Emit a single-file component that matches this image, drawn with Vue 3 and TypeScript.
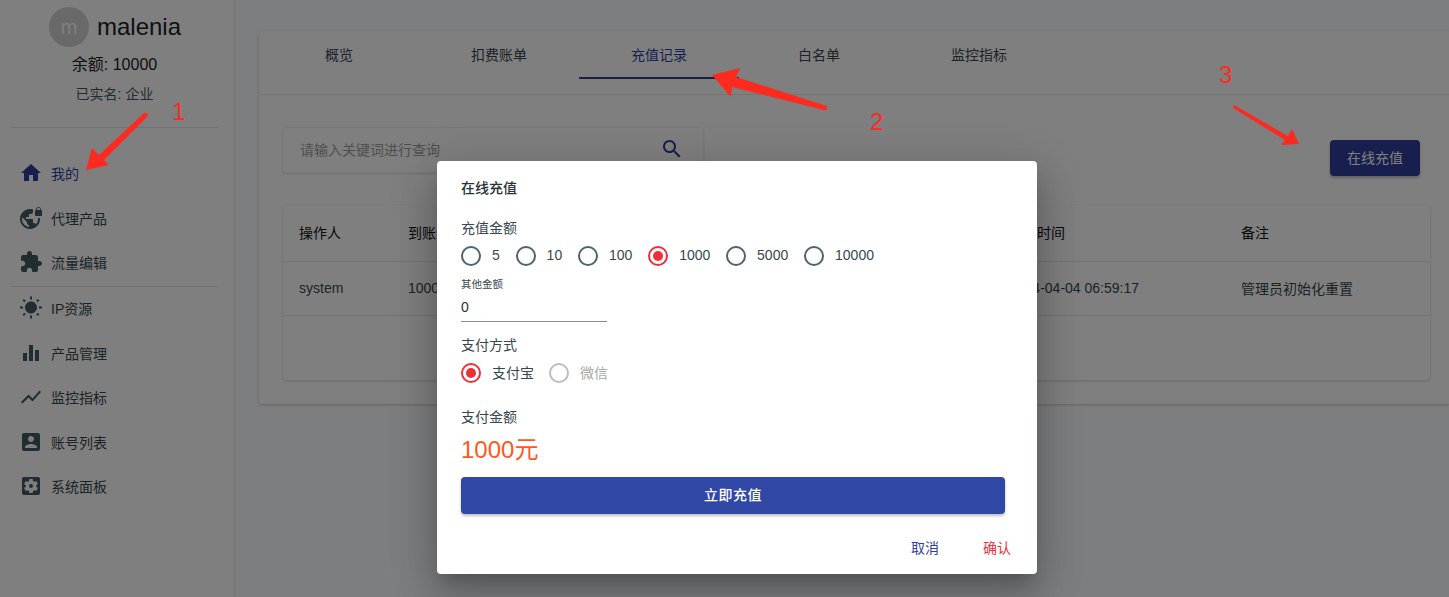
<script setup lang="ts">
const navTop = [
  { label: '我的', active: true, d: 'M10,20V14H14V20H19V12H22L12,3L2,12H5V20H10Z' },
  { label: '代理产品', d: 'M22 4v-.5C22 2.12 20.88 1 19.5 1S17 2.12 17 3.5V4c-.55 0-1 .45-1 1v4c0 .55.45 1 1 1h5c.55 0 1-.45 1-1V5c0-.55-.45-1-1-1zm-.8 0h-3.4v-.5c0-.94.76-1.7 1.7-1.7s1.7.76 1.7 1.7V4zm-2.28 8c.04.33.08.66.08 1 0 2.08-.8 3.97-2.1 5.39-.26-.81-1-1.39-1.9-1.39h-1v-3c0-.55-.45-1-1-1H7v-2h2c.55 0 1-.45 1-1V8h2c1.1 0 2-.9 2-2V3.46c-.95-.3-1.95-.46-3-.46C5.48 3 1 7.48 1 13s4.48 10 10 10 10-4.48 10-10c0-.34-.02-.67-.05-1h-2.03zM10 20.93c-3.95-.49-7-3.85-7-7.93 0-.62.08-1.21.21-1.79L8 16v1c0 1.1.9 2 2 2v1.93z' },
  { label: '流量编辑', d: 'M20.5 11H19V7c0-1.1-.9-2-2-2h-4V3.5C13 2.12 11.88 1 10.5 1S8 2.12 8 3.5V5H4c-1.1 0-1.99.9-1.99 2v3.8H3.5c1.49 0 2.7 1.21 2.7 2.7s-1.21 2.7-2.7 2.7H2V20c0 1.1.9 2 2 2h3.8v-1.5c0-1.49 1.21-2.7 2.7-2.7 1.49 0 2.7 1.21 2.7 2.7V22H17c1.1 0 2-.9 2-2v-4h1.5c1.38 0 2.5-1.12 2.5-2.5S21.88 11 20.5 11z' },
]
const navBottom = [
  { label: 'IP资源', d: 'M6.76 4.84l-1.8-1.79-1.41 1.41 1.79 1.79 1.42-1.41zM4 10.5H1v2h3v-2zm9-9.95h-2V3.5h2V.55zm7.45 3.91l-1.41-1.41-1.79 1.79 1.41 1.41 1.79-1.79zm-3.21 13.7l1.79 1.8 1.41-1.41-1.8-1.79-1.4 1.4zM20 10.5v2h3v-2h-3zm-8-5c-3.31 0-6 2.69-6 6s2.69 6 6 6 6-2.69 6-6-2.69-6-6-6zm-1 16.95h2V19.5h-2v2.95zm-7.45-3.91l1.41 1.41 1.79-1.8-1.41-1.41-1.79 1.8z' },
  { label: '产品管理', d: 'M10 20h4V4h-4v16zm-6 0h4v-8H4v8zM16 9v11h4V9h-4z' },
  { label: '监控指标', d: 'M3.5 18.49l6-6.01 4 4L22 6.92l-1.41-1.41-7.09 7.97-4-4L2 16.99z' },
  { label: '账号列表', d: 'M3 5v14c0 1.1.89 2 2 2h14c1.1 0 2-.9 2-2V5c0-1.1-.9-2-2-2H5c-1.11 0-2 .9-2 2zm12 4c0 1.66-1.34 3-3 3s-3-1.34-3-3 1.34-3 3-3 3 1.34 3 3zm-9 8c0-2 4-3.1 6-3.1s6 1.1 6 3.1v1H6v-1z' },
  { label: '系统面板', d: 'M12 10c-1.1 0-2 .9-2 2s.9 2 2 2 2-.9 2-2-.9-2-2-2zm7-7H5c-1.11 0-2 .9-2 2v14c0 1.1.89 2 2 2h14c1.11 0 2-.9 2-2V5c0-1.1-.89-2-2-2zm-1.75 9c0 .23-.02.46-.05.68l1.48 1.16c.13.11.17.3.08.45l-1.4 2.42c-.09.15-.27.21-.43.15l-1.74-.7c-.36.28-.76.51-1.18.69l-.26 1.85c-.03.17-.18.3-.35.3h-2.8c-.17 0-.32-.13-.35-.29l-.26-1.85c-.43-.18-.82-.41-1.18-.69l-1.74.7c-.16.06-.34 0-.43-.15l-1.4-2.42c-.09-.15-.05-.34.08-.45l1.48-1.16c-.03-.23-.05-.46-.05-.69 0-.23.02-.46.05-.68l-1.48-1.16c-.13-.11-.17-.3-.08-.45l1.4-2.42c.09-.15.27-.21.43-.15l1.74.7c.36-.28.76-.51 1.18-.69l.26-1.85c.03-.17.18-.3.35-.3h2.8c.17 0 .32.13.35.29l.26 1.85c.43.18.82.41 1.18.69l1.74-.7c.16-.06.34 0 .43.15l1.4 2.42c.09.15.05.34-.08.45l-1.48 1.16c.03.23.05.46.05.69z' },
]
const tabs = ['概览', '扣费账单', '充值记录', '白名单', '监控指标']
const amounts = [5, 10, 100, 1000, 5000, 10000]
const selected = 1000
const searchPath = 'M15.5 14h-.79l-.28-.27C15.41 12.59 16 11.11 16 9.5 16 5.91 13.09 3 9.5 3S3 5.91 3 9.5 5.91 16 9.5 16c1.61 0 3.09-.59 4.23-1.57l.27.28v.79l5 4.99L20.49 19l-4.99-5zm-6 0C7.01 14 5 11.99 5 9.5S7.01 5 9.5 5 14 7.01 14 9.5 11.99 14 9.5 14z'
</script>

<template>
  <div class="page">
    <aside class="sidebar">
      <div class="profile">
        <div class="avatar">m</div>
        <span class="name">malenia</span>
      </div>
      <p class="balance">余额: 10000</p>
      <p class="verified">已实名: 企业</p>
      <hr class="rule rule-first" />
      <nav class="nav nav-first">
        <a v-for="item in navTop" :key="item.label" class="nav-item" :class="{ active: item.active }">
          <svg viewBox="0 0 24 24" width="24" height="24"><path :d="item.d" /></svg>
          <span>{{ item.label }}</span>
        </a>
      </nav>
      <hr class="rule rule-second" />
      <nav class="nav nav-second">
        <a v-for="item in navBottom" :key="item.label" class="nav-item">
          <svg viewBox="0 0 24 24" width="24" height="24"><path :d="item.d" /></svg>
          <span>{{ item.label }}</span>
        </a>
      </nav>
    </aside>

    <main class="main">
      <section class="card">
        <div class="tabs">
          <div v-for="tab in tabs" :key="tab" class="tab" :class="{ active: tab === '充值记录' }">{{ tab }}</div>
        </div>
        <div class="body">
          <div class="toolbar">
            <div class="search">
              <span class="placeholder">请输入关键词进行查询</span>
              <svg viewBox="0 0 24 24" width="24" height="24"><path :d="searchPath" /></svg>
            </div>
            <button class="recharge">在线充值</button>
          </div>
          <div class="table">
            <div class="row head">
              <span>操作人</span><span>到账金额</span><span>创建时间</span><span>备注</span>
            </div>
            <div class="row">
              <span>system</span><span>10000</span><span>2024-04-04 06:59:17</span><span>管理员初始化重置</span>
            </div>
          </div>
        </div>
      </section>
    </main>

    <div class="overlay"></div>

    <div class="dialog">
      <h2 class="dialog-title">在线充值</h2>
      <p class="label label-amount">充值金额</p>
      <div class="radios radios-amount">
        <label v-for="a in amounts" :key="a" class="radio" :class="{ on: a === selected }">
          <i class="ring"></i><span>{{ a }}</span>
        </label>
      </div>
      <div class="field">
        <span class="field-label">其他金额</span>
        <span class="field-value">0</span>
      </div>
      <p class="label label-pay">支付方式</p>
      <div class="radios">
        <label class="radio on"><i class="ring"></i><span>支付宝</span></label>
        <label class="radio off"><i class="ring"></i><span>微信</span></label>
      </div>
      <p class="label label-total">支付金额</p>
      <p class="total">1000元</p>
      <button class="pay">立即充值</button>
      <div class="actions">
        <a class="cancel">取消</a>
        <a class="confirm">确认</a>
      </div>
    </div>

    <svg class="marks" viewBox="0 0 1449 597" width="1449" height="597">
      <polygon points="86,170 92,148 99,155 144,113 147,113 148,116 104,160 109,165" />
      <polygon points="712,75 740,68 736,77 827,106 827,110 824,110 732,87 731,97" />
      <polygon points="1234,105 1288,136 1292,129 1299,144 1281,145 1285,140 1233,108" />
    </svg>
    <span class="mark mark-1">1</span>
    <span class="mark mark-2">2</span>
    <span class="mark mark-3">3</span>
  </div>
</template>

<style>
html, body { margin: 0; background: #fbfcff; }
</style>

<style scoped>
* { box-sizing: border-box; }

.page {
  position: relative;
  display: flex;
  width: 1449px;
  height: 597px;
  overflow: hidden;
  background: #fbfcff;
  font-family: "Liberation Sans", "Noto Sans CJK SC", sans-serif;
  font-size: 14px;
  color: #263238;
}

.sidebar {
  width: 235px;
  flex: none;
  height: 100%;
  padding: 7px 16px 0 11px;
  background: #fff;
  border-right: 1px solid #e8e8e8;
}

.profile {
  display: flex;
  align-items: center;
  justify-content: center;
  gap: 8px;
  height: 40px;
  padding-left: 1px;
}

.avatar {
  width: 40px;
  height: 40px;
  border-radius: 50%;
  background: #d2d2d2;
  color: #fff;
  font-size: 20px;
  line-height: 40px;
  text-align: center;
}

.name {
  font-size: 24px;
  color: #212121;
}

.balance {
  margin: 7px 0 0;
  font-size: 16px;
  line-height: 22px;
  text-align: center;
  color: #212121;
}

.verified {
  margin: 8px 0 0;
  line-height: 20px;
  text-align: center;
  color: #455a64;
}

.rule {
  margin: 0;
  border: 0;
  border-top: 1px solid #e4e4e4;
}

.rule-first { margin-top: 23px; }
.rule-second { margin-top: 2px; }
.nav-first { margin-top: 23px; }
.nav-second { margin-top: -1px; }

.nav-item {
  display: flex;
  align-items: center;
  gap: 8px;
  height: 44.4px;
  padding-left: 8px;
  color: #37474f;
}

.nav-item svg { fill: #455a64; }
.nav-item.active { color: #303f9f; }
.nav-item.active svg { fill: #303f9f; }

.main {
  flex: 1;
  min-width: 0;
  padding: 31px 0 0 24px;
}

.card {
  background: #fff;
  border-radius: 4px 0 0 4px;
  box-shadow: 0 1px 3px rgba(0, 0, 0, 0.2);
}

.tabs {
  display: flex;
  height: 64px;
  align-items: flex-start;
  border-bottom: 1px solid #ebebeb;
}

.tab {
  width: 160px;
  height: 48px;
  line-height: 48px;
  text-align: center;
  color: #37474f;
}

.tab.active {
  color: #303f9f;
  border-bottom: 2px solid #303f9f;
}

.body { padding: 32px 19px 24px 24px; }

.toolbar {
  display: flex;
  justify-content: space-between;
  align-items: flex-start;
  height: 46px;
  padding-right: 10px;
}

.search {
  display: flex;
  align-items: center;
  justify-content: space-between;
  width: 422px;
  height: 46px;
  margin-left: -1px;
  padding: 0 19px 2px 17px;
  border: 1px solid #f0f0f0;
  border-radius: 4px;
  box-shadow: 0 1px 2px rgba(0, 0, 0, 0.12);
}

.placeholder { color: #9e9e9e; }
.search svg { fill: #303f9f; }

.recharge {
  width: 90px;
  height: 36px;
  margin-top: 13px;
  padding: 0 0 2px;
  border: 0;
  border-radius: 4px;
  background: #303f9f;
  color: #fff;
  font: inherit;
  box-shadow: 0 2px 3px rgba(0, 0, 0, 0.25);
}

.table {
  height: 175px;
  margin-top: 32px;
  border-radius: 4px;
  box-shadow: 0 1px 3px rgba(0, 0, 0, 0.18);
}

.row {
  display: grid;
  grid-template-columns: 109px 601px 232px 1fr;
  align-items: center;
  height: 54px;
  padding-bottom: 2px;
  border-bottom: 1px solid #e6e6e6;
  color: #37474f;
}

.row span { padding-left: 16px; }
.row.head { height: 57px; color: #101010; }

.overlay {
  position: absolute;
  inset: 0;
  background: rgba(0, 0, 0, 0.5);
}

.dialog {
  position: absolute;
  left: 437px;
  top: 161px;
  width: 600px;
  height: 413px;
  padding: 17px 32px 16px 24px;
  border-radius: 4px;
  background: #fff;
  box-shadow: 0 11px 15px -7px rgba(0, 0, 0, 0.2), 0 24px 38px 3px rgba(0, 0, 0, 0.14), 0 9px 46px 8px rgba(0, 0, 0, 0.12);
}

.dialog-title {
  margin: 0;
  font-size: 14px;
  font-weight: 500;
  line-height: 20px;
  color: #263238;
}

.label {
  margin: 0;
  line-height: 20px;
  color: #37474f;
}

.label-amount { margin-top: 20px; }
.label-pay { margin-top: 13px; }
.label-total { margin-top: 22px; }

.radios {
  display: flex;
  height: 24px;
  margin-top: 6px;
  align-items: center;
  gap: 15px;
}

.radios-amount { gap: 15.8px; }

.radio {
  display: flex;
  align-items: center;
  gap: 11px;
  line-height: 24px;
  color: #37474f;
}

.radios-amount .radio span { margin-bottom: 2px; }

.ring {
  position: relative;
  display: block;
  width: 20px;
  height: 20px;
  border: 2px solid #4a6572;
  border-radius: 50%;
}

.radio.on .ring { border-color: #ed2f38; }

.radio.on .ring::after {
  content: "";
  position: absolute;
  inset: 3px;
  border-radius: 50%;
  background: #ed2f38;
}

.radio.off { color: #a8a8a8; }
.radio.off .ring { border-color: #bdbdbd; }

.field {
  display: flex;
  flex-direction: column;
  width: 146px;
  margin-top: 9px;
  border-bottom: 1px solid #8a8a8a;
}

.field-label {
  font-size: 10.5px;
  line-height: 14px;
  color: #37474f;
}

.field-value {
  margin-top: 6px;
  padding-bottom: 4px;
  line-height: 20px;
  color: #263238;
}

.total {
  margin: 8px 0 0;
  font-size: 24px;
  line-height: 30px;
  color: #ff5722;
}

.pay {
  display: block;
  width: 100%;
  height: 37px;
  margin-top: 12px;
  padding: 0 0 3px;
  border: 0;
  border-radius: 4px;
  background: #3047a6;
  color: #fff;
  font: inherit;
  font-weight: 500;
  letter-spacing: 0.5px;
  box-shadow: 0 2px 3px rgba(0, 0, 0, 0.25);
}

.actions {
  display: flex;
  justify-content: flex-end;
  gap: 44px;
  margin: 24px -6px 0 0;
  line-height: 20px;
}

.cancel { color: #303f9f; }
.confirm { color: #f0303a; }

.marks {
  position: absolute;
  left: 0;
  top: 0;
  fill: #fc2a1f;
}

.mark {
  position: absolute;
  font-size: 24px;
  line-height: 28px;
  color: #fc2a1f;
}

.mark-1 { left: 172px; top: 98px; }
.mark-2 { left: 870px; top: 108px; }
.mark-3 { left: 1219px; top: 61px; }
</style>
